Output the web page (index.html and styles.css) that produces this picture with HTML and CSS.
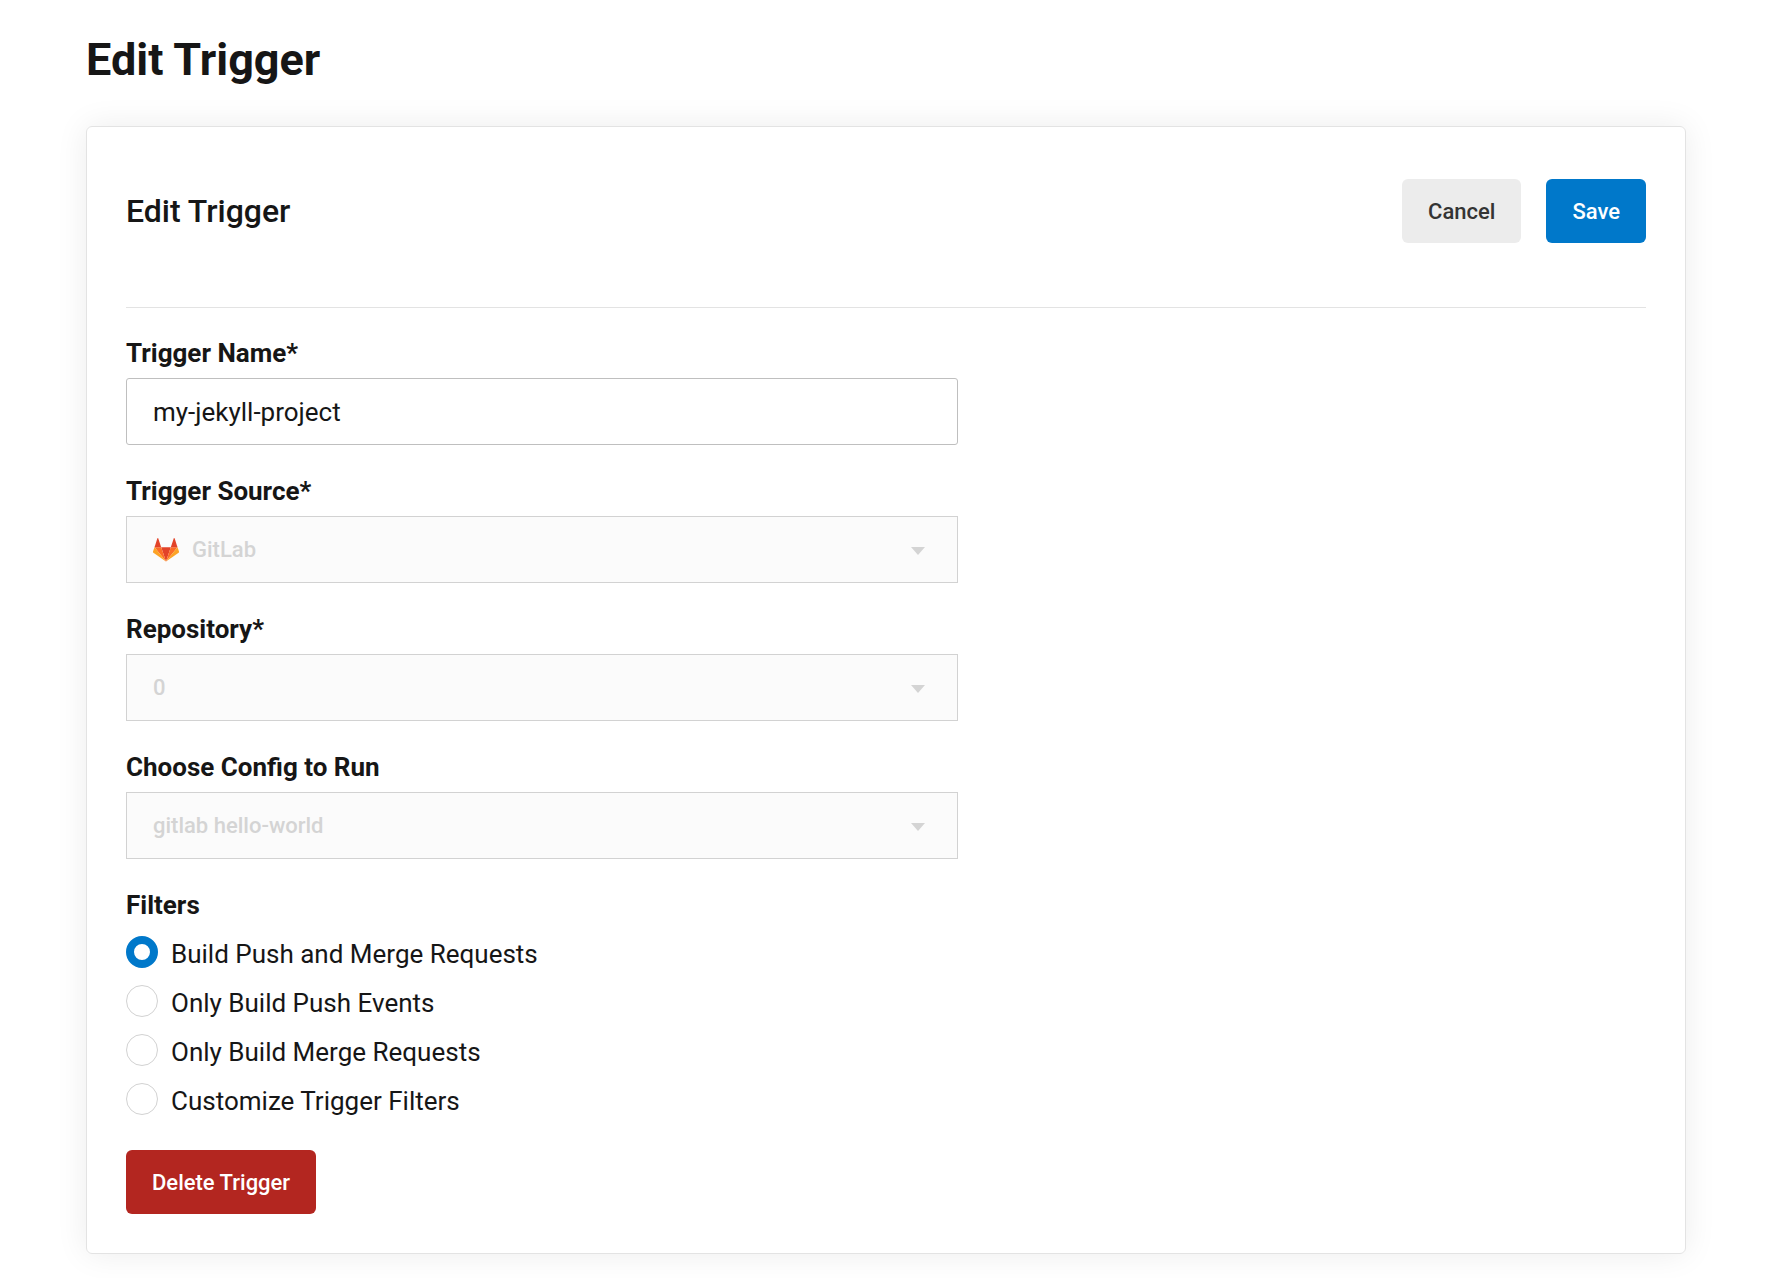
FILE: index.html
```
<!DOCTYPE html>
<html lang="en">
<head>
<meta charset="utf-8">
<meta name="viewport" content="width=device-width, initial-scale=1">
<title>Edit Trigger</title>
<link rel="stylesheet" href="styles.css">
</head>
<body>
<main class="page">
  <h1 class="page-title">Edit Trigger</h1>
  <form class="card">
    <header class="card-header">
      <h2 class="card-title">Edit Trigger</h2>
      <div class="actions">
        <button type="button" class="btn btn-cancel">Cancel</button>
        <button type="submit" class="btn btn-save">Save</button>
      </div>
    </header>

    <div class="field">
      <label class="label" for="name">Trigger Name*</label>
      <input class="control" id="name" type="text" value="my-jekyll-project">
    </div>

    <div class="field">
      <label class="label" for="source">Trigger Source*</label>
      <div class="select has-icon">
        <svg class="source-icon" viewBox="0 0 26 24" aria-hidden="true">
          <path fill="#e24329" d="M13 23.500 8.200 9.300h9.600z"/>
          <path fill="#fc6d26" d="M13 23.500 8.200 9.300H1.500z"/>
          <path fill="#fca326" d="M1.500 9.300 0 13.500c-.1.500 0 .9.400 1.200L13 23.500z"/>
          <path fill="#e24329" d="M1.500 9.300h6.700L5.300.5c-.2-.5-.8-.5-1 0z"/>
          <path fill="#fc6d26" d="M13 23.500 17.800 9.300h6.700z"/>
          <path fill="#fca326" d="M24.500 9.300 26 13.500c.1.500 0 .9-.4 1.200L13 23.500z"/>
          <path fill="#e24329" d="M24.500 9.300h-6.700L20.700.5c.2-.5.8-.5 1 0z"/>
        </svg>
        <select class="control" id="source" disabled><option>GitLab</option></select>
        <svg class="caret" viewBox="0 0 14 8" aria-hidden="true"><path d="M0 0h14L7 8z"/></svg>
      </div>
    </div>

    <div class="field">
      <label class="label" for="repository">Repository*</label>
      <div class="select">
        <select class="control" id="repository" disabled><option>0</option></select>
        <svg class="caret" viewBox="0 0 14 8" aria-hidden="true"><path d="M0 0h14L7 8z"/></svg>
      </div>
    </div>

    <div class="field">
      <label class="label" for="config">Choose Config to Run</label>
      <div class="select">
        <select class="control" id="config" disabled><option>gitlab hello-world</option></select>
        <svg class="caret" viewBox="0 0 14 8" aria-hidden="true"><path d="M0 0h14L7 8z"/></svg>
      </div>
    </div>

    <fieldset class="filters">
      <legend class="label">Filters</legend>
      <div class="options">
        <label class="option"><input type="radio" name="filter" checked><span>Build Push and Merge Requests</span></label>
        <label class="option"><input type="radio" name="filter"><span>Only Build Push Events</span></label>
        <label class="option"><input type="radio" name="filter"><span>Only Build Merge Requests</span></label>
        <label class="option"><input type="radio" name="filter"><span>Customize Trigger Filters</span></label>
      </div>
    </fieldset>

    <button type="button" class="btn btn-delete">Delete Trigger</button>
  </form>
</main>
</body>
</html>
```
FILE: styles.css
```
* {
  box-sizing: border-box;
}

body {
  margin: 0;
  background: #fff;
  color: #161616;
  font-family: Roboto, "Liberation Sans", sans-serif;
  font-size: 26px;
  line-height: 32px;
}

.page {
  padding: 32px 90px 24px 86px;
}

.page-title {
  margin: 0 0 38px;
  font-size: 45px;
  font-weight: 700;
  line-height: 56px;
}

.card {
  padding: 52px 39px 39px;
  border: 1px solid #e3e3e3;
  border-radius: 6px;
  box-shadow: 0 0 32px rgba(0, 0, 0, 0.08);
}

.card-header {
  display: flex;
  align-items: center;
  justify-content: space-between;
  margin-bottom: 29px;
  padding-bottom: 64px;
  border-bottom: 1px solid #e3e3e3;
}

.card-title {
  margin: 0;
  font-size: 32px;
  font-weight: 500;
  line-height: 40px;
}

.actions {
  display: flex;
  gap: 25px;
}

.btn {
  height: 64px;
  padding: 2px 26px 0;
  border: 0;
  border-radius: 6px;
  color: #fff;
  font: 500 22px/28px Roboto, "Liberation Sans", sans-serif;
}

.btn-cancel {
  background: #ececec;
  color: #343434;
}

.btn-save {
  background: #0078ca;
}

.btn-delete {
  background: #b32620;
}

.field {
  max-width: 832px;
  margin-bottom: 30px;
}

.label {
  display: block;
  padding: 0;
  margin-bottom: 9px;
  font-weight: 700;
}

.control {
  display: block;
  width: 100%;
  height: 67px;
  padding: 0 26px;
  border: 1px solid #bfbfbf;
  border-radius: 3px;
  background: #fff;
  color: #161616;
  font: 400 26px/32px Roboto, "Liberation Sans", sans-serif;
}

.select {
  position: relative;
}

.select .control {
  appearance: none;
  border-color: #d2d2d2;
  border-radius: 0;
  background: #fbfbfb;
  color: #d4d4d4;
  font-size: 22px;
  font-weight: 500;
  opacity: 1;
}

.has-icon .control {
  padding-left: 65px;
}

.source-icon {
  position: absolute;
  top: 22px;
  left: 27px;
  width: 26px;
  height: 24px;
}

.caret {
  position: absolute;
  top: 31px;
  right: 33px;
  width: 14px;
  height: 8px;
  fill: #d4d4d4;
  pointer-events: none;
}

.filters {
  margin: 0 0 33px;
  padding: 0;
  border: 0;
}

.filters .label {
  margin-bottom: 15px;
}

.options {
  display: grid;
  gap: 15px;
}

.option {
  display: flex;
  align-items: flex-start;
  gap: 13px;
}

.option span {
  padding-top: 2px;
}

.option input {
  appearance: none;
  flex: none;
  width: 32px;
  height: 32px;
  margin: 0;
  border: 1px solid #d2d2d2;
  border-radius: 50%;
  background: #fff;
}

.option input:checked {
  border: 8px solid #0078ca;
}
```
